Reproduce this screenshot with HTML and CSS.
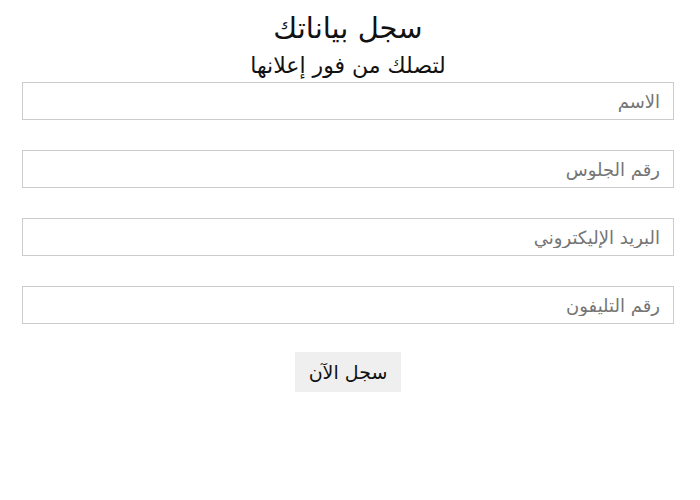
FILE: index.html
```html
<!DOCTYPE html>
<html lang="ar" dir="rtl">
<head>
<meta charset="utf-8">
<link rel="stylesheet" href="styles.css">
</head>
<body>
<div class="page">
  <h2 class="title">سجل بياناتك</h2>
  <p class="subtitle">لتصلك من فور إعلانها</p>
  <form class="form">
    <input class="field" type="text" placeholder="الاسم">
    <input class="field" type="text" placeholder="رقم الجلوس">
    <input class="field" type="text" placeholder="البريد الإليكتروني">
    <input class="field" type="text" placeholder="رقم التليفون">
    <button class="submit" type="button">سجل الآن</button>
  </form>
</div>
</body>
</html>
```

FILE: styles.css
```css
html, body {
  margin: 0;
  padding: 0;
  background: #fff;
}
body {
  font-family: "DejaVu Sans", sans-serif;
  color: #111;
}
.page {
  padding: 10px 26px 0 22px;
  display: flex;
  flex-direction: column;
  align-items: center;
}
.title {
  margin: 0;
  font-size: 29px;
  font-weight: 400;
  line-height: 36px;
}
.subtitle {
  margin: 5px 0 0;
  font-size: 22px;
  line-height: 30px;
}
.form {
  width: 100%;
  display: flex;
  flex-direction: column;
  align-items: center;
  gap: 30px;
  margin-top: 1px;
}
.field {
  box-sizing: border-box;
  width: 100%;
  height: 38px;
  border: 1px solid #cccccc;
  padding: 0 13px;
  font-family: inherit;
  font-size: 18px;
  direction: rtl;
  text-align: right;
  outline: none;
}
.field::placeholder {
  color: #757575;
}
.submit {
  width: 106px;
  height: 40px;
  margin-top: -2px;
  border: none;
  background: #efefef;
  font-family: inherit;
  font-size: 19px;
  color: #111;
}
```
